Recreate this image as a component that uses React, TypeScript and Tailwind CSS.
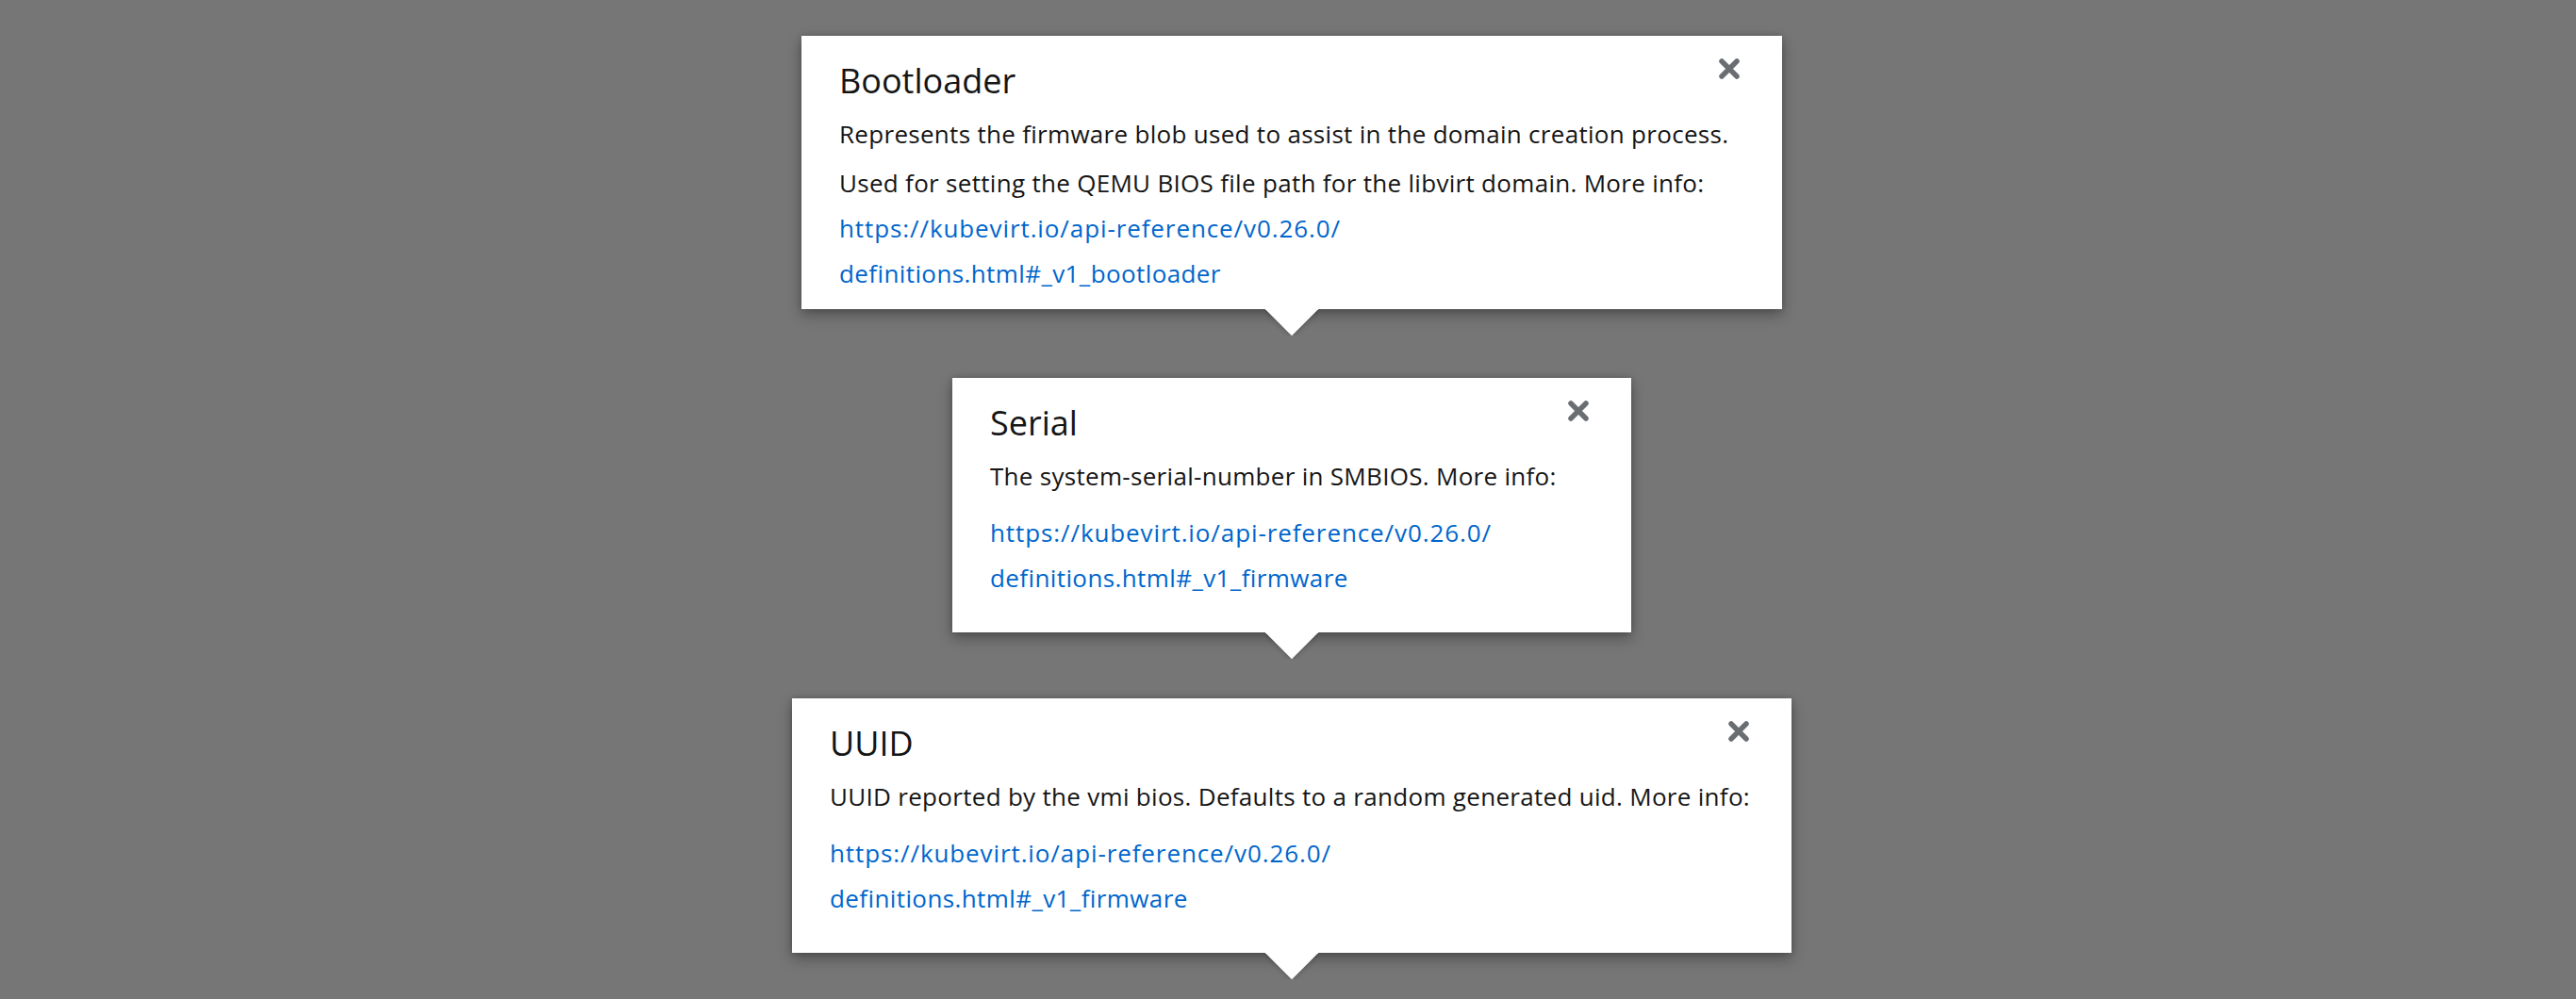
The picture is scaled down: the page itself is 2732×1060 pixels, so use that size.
import React from "react";

const font = { fontFamily: '"Open Sans", "Noto Sans", sans-serif' };

function CloseIcon() {
  return (
    <svg viewBox="0 0 24 24" className="w-6 h-6">
      <path d="M4 4 L20 20 M20 4 L4 20" stroke="#6a6e73" strokeWidth="5.5" strokeLinecap="round" fill="none" />
    </svg>
  );
}

function Link({ parts }: { parts: [string, string] }) {
  return (
    <a className="text-[#0066cc] no-underline">
      <span className="block tracking-[0.9px]">{parts[0]}</span>
      <span className="block tracking-[0.4px]">{parts[1]}</span>
    </a>
  );
}

function Popover({ title, widthClass, children, padClass }: { title: string; widthClass: string; children: React.ReactNode; padClass: string }) {
  return (
    <div className={`relative ${widthClass}`}>
      <div className={`relative bg-white pl-[40px] pr-[20px] pt-[24px] ${padClass} shadow-[0_6px_14px_rgba(0,0,0,0.32),0_0_6px_rgba(0,0,0,0.18)]`}>
        <button className="absolute top-[23px] right-[44px]">
          <CloseIcon />
        </button>
        <h2 className="text-[36px] leading-[48px] font-medium text-[#151515]">{title}</h2>
        <div className="mt-[8px] text-[26px] leading-[48px] tracking-[0.3px] text-[#151515] whitespace-nowrap">{children}</div>
      </div>
      {/* arrow */}
      <div className="absolute left-1/2 -translate-x-1/2 -bottom-[28px] w-[56px] h-[28px] overflow-hidden">
        <div className="w-[40px] h-[40px] bg-white rotate-45 -translate-y-[20px] mx-auto shadow-[0_0_6px_rgba(0,0,0,0.3)]" />
      </div>
    </div>
  );
}

export default function App() {
  return (
    <div className="w-[2732px] h-[1060px] overflow-hidden bg-[#767676]" style={font}>
      <div className="flex flex-col items-center pl-[8px] pt-[38px]">
        <Popover title="Bootloader" widthClass="w-[1040px]" padClass="pb-[14px]">
          <p>Represents the firmware blob used to assist in the domain creation process.</p>
          <p className="mt-[4px]">Used for setting the QEMU BIOS file path for the libvirt domain. More info:</p>
          <Link parts={["https://kubevirt.io/api-reference/v0.26.0/", "definitions.html#_v1_bootloader"]} />
        </Popover>

        <div className="mt-[73px]">
          <Popover title="Serial" widthClass="w-[720px]" padClass="pb-[34px]">
            <p>The system-serial-number in SMBIOS. More info:</p>
            <div className="mt-[12px]">
              <Link parts={["https://kubevirt.io/api-reference/v0.26.0/", "definitions.html#_v1_firmware"]} />
            </div>
          </Popover>
        </div>

        <div className="mt-[70px]">
          <Popover title="UUID" widthClass="w-[1060px]" padClass="pb-[34px]">
            <p>UUID reported by the vmi bios. Defaults to a random generated uid. More info:</p>
            <div className="mt-[12px]">
              <Link parts={["https://kubevirt.io/api-reference/v0.26.0/", "definitions.html#_v1_firmware"]} />
            </div>
          </Popover>
        </div>
      </div>
    </div>
  );
}
